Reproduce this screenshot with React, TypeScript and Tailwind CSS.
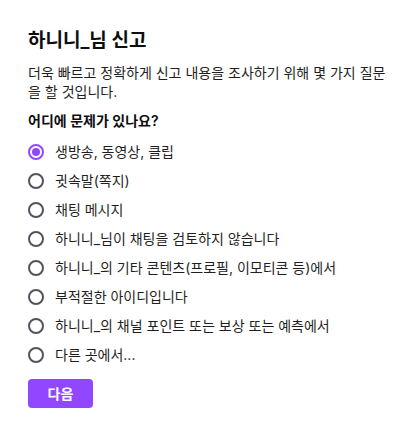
import React, { useState } from "react";

const options = [
  "생방송, 동영상, 클립",
  "귓속말(쪽지)",
  "채팅 메시지",
  "하니니_님이 채팅을 검토하지 않습니다",
  "하니니_의 기타 콘텐츠(프로필, 이모티콘 등)에서",
  "부적절한 아이디입니다",
  "하니니_의 채널 포인트 또는 보상 또는 예측에서",
  "다른 곳에서...",
];

export default function App() {
  const [sel, setSel] = useState(0);
  return (
    <div
      className="w-[417px] h-[436px] bg-white text-[#0e0e10] px-[28px] pt-[28px] flex flex-col items-start"
      style={{ fontFamily: 'Inter, "Noto Sans CJK KR", sans-serif' }}
    >
      <h1 className="text-[19px] font-semibold leading-[26px]">하니니_님 신고</h1>
      <p className="mt-[9px] text-[14px] leading-[19px] text-[#1f1f23]">
        더욱 빠르고 정확하게 신고 내용을 조사하기 위해 몇 가지 질문을 할 것입니다.
      </p>
      <div className="mt-[10px] text-[14px] font-semibold leading-[20px]">어디에 문제가 있나요?</div>
      <div className="mt-[6px] flex flex-col self-stretch" role="radiogroup">
        {options.map((o, i) => (
          <label
            key={i}
            className="flex items-center h-[29px] cursor-pointer"
            onClick={() => setSel(i)}
          >
            <span
              className={
                "w-[16px] h-[16px] rounded-full border-2 flex items-center justify-center " +
                (sel === i ? "border-[#9147ff]" : "border-[#53535f]")
              }
            >
              {sel === i && <span className="w-[8px] h-[8px] rounded-full bg-[#9147ff]" />}
            </span>
            <span className="ml-[11px] text-[14px] text-[#1f1f23]">{o}</span>
          </label>
        ))}
      </div>
      <button className="mt-[10px] w-[65px] h-[29px] rounded-[4px] bg-[#9147ff] text-white text-[14px] font-semibold leading-none">
        다음
      </button>
    </div>
  );
}
